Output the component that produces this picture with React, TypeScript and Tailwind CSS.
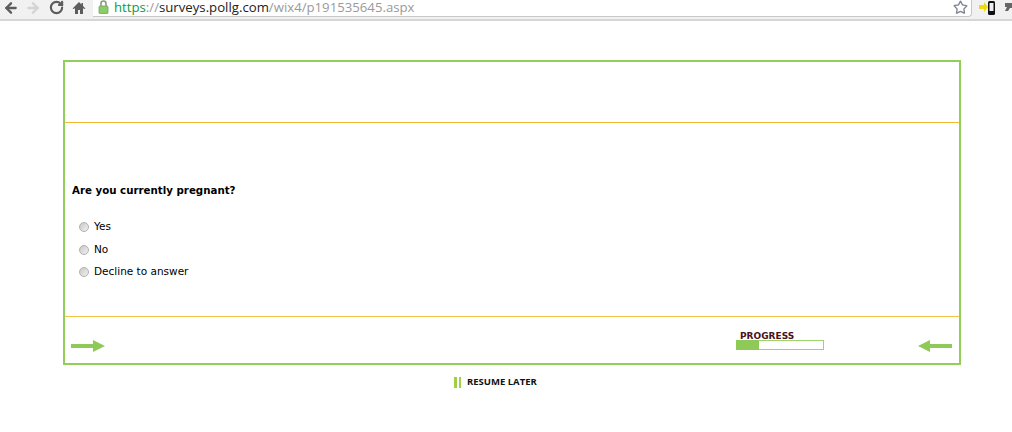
import { ArrowLeft, ArrowRight, RotateCw, Star } from 'lucide-react';

const OPTIONS = ['Yes', 'No', 'Decline to answer'];

function Radio() {
  return (
    <span className="box-border block h-[10px] w-[10px] shrink-0 rounded-full border border-[#b0b0b0] bg-gradient-to-br from-[#c8c8c8] to-[#f2f2f2]" />
  );
}

function Lock() {
  return (
    <svg width="11" height="14" viewBox="0 0 11 14" className="shrink-0">
      <path d="M3 6V3.5a2.5 2.5 0 0 1 5 0V6" fill="none" stroke="#8a9a80" strokeWidth="1.6" />
      <rect x="1" y="6" width="9" height="7.5" rx="1" fill="#8ccb6a" stroke="#6fa556" strokeWidth="0.8" />
    </svg>
  );
}

function HomeIcon() {
  return (
    <svg width="14" height="14" viewBox="0 0 14 14" className="ml-[2px] shrink-0">
      <path d="M7 1 0.5 7.5 2 8l1-1v6h3V9h2v4h3V7l1 1 1.5-.5L11 5V2H9.5v1.5z" fill="#5c5c5c" />
    </svg>
  );
}

function Arrow({ flip }: { flip?: boolean }) {
  return (
    <svg width="34" height="12" viewBox="0 0 34 12" className={flip ? 'rotate-180' : ''}>
      <path d="M0 4h22V0l12 6-12 6V8H0z" fill="#8fc957" />
    </svg>
  );
}

export default function App() {
  return (
    <div className="h-[432px] w-[1012px] overflow-hidden bg-white font-['DejaVu_Sans',sans-serif] text-[10.5px] text-black">
      {/* browser toolbar */}
      <div className="flex h-[21px] items-start border-b-2 border-[#d6d6d6] bg-[#f1f1f1]">
        <div className="flex h-[15px] w-[93px] shrink-0 items-center gap-[6px] pl-[3px]">
          <ArrowLeft size={16} strokeWidth={3.5} className="text-[#5c5c5c]" />
          <ArrowRight size={16} strokeWidth={3.5} className="text-[#d4d4d4]" />
          <RotateCw size={15} strokeWidth={3.5} className="ml-[2px] text-[#5c5c5c]" />
          <HomeIcon />
        </div>
        <div className="flex h-[17px] w-[879px] shrink-0 items-start gap-[5px] rounded-br-[4px] border-r border-b border-[#c8c8c8] bg-white pl-[5px] font-['Open_Sans',sans-serif] text-[13.2px] leading-[14px]">
          <Lock />
          <span className="whitespace-nowrap text-[#9a9a9a]">
            <span className="text-[#0b9b3e]">https</span>
            ://
            <span className="text-[#222222]">surveys.pollg.com</span>
            /wix4/p191535645.aspx
          </span>
          <Star size={15} strokeWidth={2.2} className="mr-[3px] ml-auto text-[#7d8794]" />
        </div>
        <div className="flex h-[15px] items-center gap-[8px] pl-[7px]">
          <svg width="17" height="14" viewBox="0 0 17 14">
            <path d="M0 4h5V1l4 5-4 5V8H0z" fill="#f2d90e" />
            <rect x="9" y="0" width="7" height="14" rx="1.5" fill="#111111" />
            <rect x="10.5" y="2" width="4" height="8" fill="#eeeeee" />
          </svg>
          <svg width="9" height="12" viewBox="0 0 9 12">
            <path d="M1 1h8v5H6L4 9H1l2-4H1z" fill="#666666" />
          </svg>
        </div>
      </div>

      {/* survey frame */}
      <div className="mt-[39px] ml-[63px] box-border flex h-[305px] w-[898px] flex-col border-2 border-[#93cd5a]">
        <div className="h-[60px] shrink-0" />
        <div className="h-px shrink-0 bg-[#f2b632]" />
        <div className="flex h-[193px] shrink-0 flex-col pt-[60px] pl-[7px]">
          <p className="text-[10.25px] leading-[14px] font-bold">Are you currently pregnant?</p>
          <ul className="mt-[22px] flex flex-col gap-[8.5px] pl-[7px]">
            {OPTIONS.map((o) => (
              <li key={o} className="flex h-[14px] items-center gap-[5px] leading-[14px]">
                <span className="pt-[2px]">
                  <Radio />
                </span>
                {o}
              </li>
            ))}
          </ul>
        </div>
        <div className="h-px shrink-0 bg-[#f2c445]" />
        <div className="flex min-h-0 flex-1 items-start pr-[7px] pl-[6px]">
          <div className="mt-[23px]">
            <Arrow />
          </div>
          <div className="mt-[13px] ml-[631px] w-[88px]">
            <div className="box-border h-[10px] pt-[1px] pl-[4px] text-[9px] leading-[10px] font-bold text-[#4a1020]">
              PROGRESS
            </div>
            <div className="box-border h-[10px] border border-[#9fd46a] bg-white">
              <div className="-mt-px -ml-px h-[10px] w-[23px] bg-[#8fc957]" />
            </div>
          </div>
          <div className="mt-[23px] ml-auto">
            <Arrow flip />
          </div>
        </div>
      </div>

      {/* resume later */}
      <div className="mt-[11px] ml-[454px] flex h-[12px] items-center gap-[6px]">
        <div className="flex h-[11px] gap-[2px]">
          <span className="block w-[2.5px] bg-[#9fd046]" />
          <span className="block w-[2.5px] bg-[#9fd046]" />
        </div>
        <span className="font-['Open_Sans',sans-serif] text-[9.5px] leading-[12px] font-bold text-[#111111]">
          RESUME LATER
        </span>
      </div>
    </div>
  );
}
